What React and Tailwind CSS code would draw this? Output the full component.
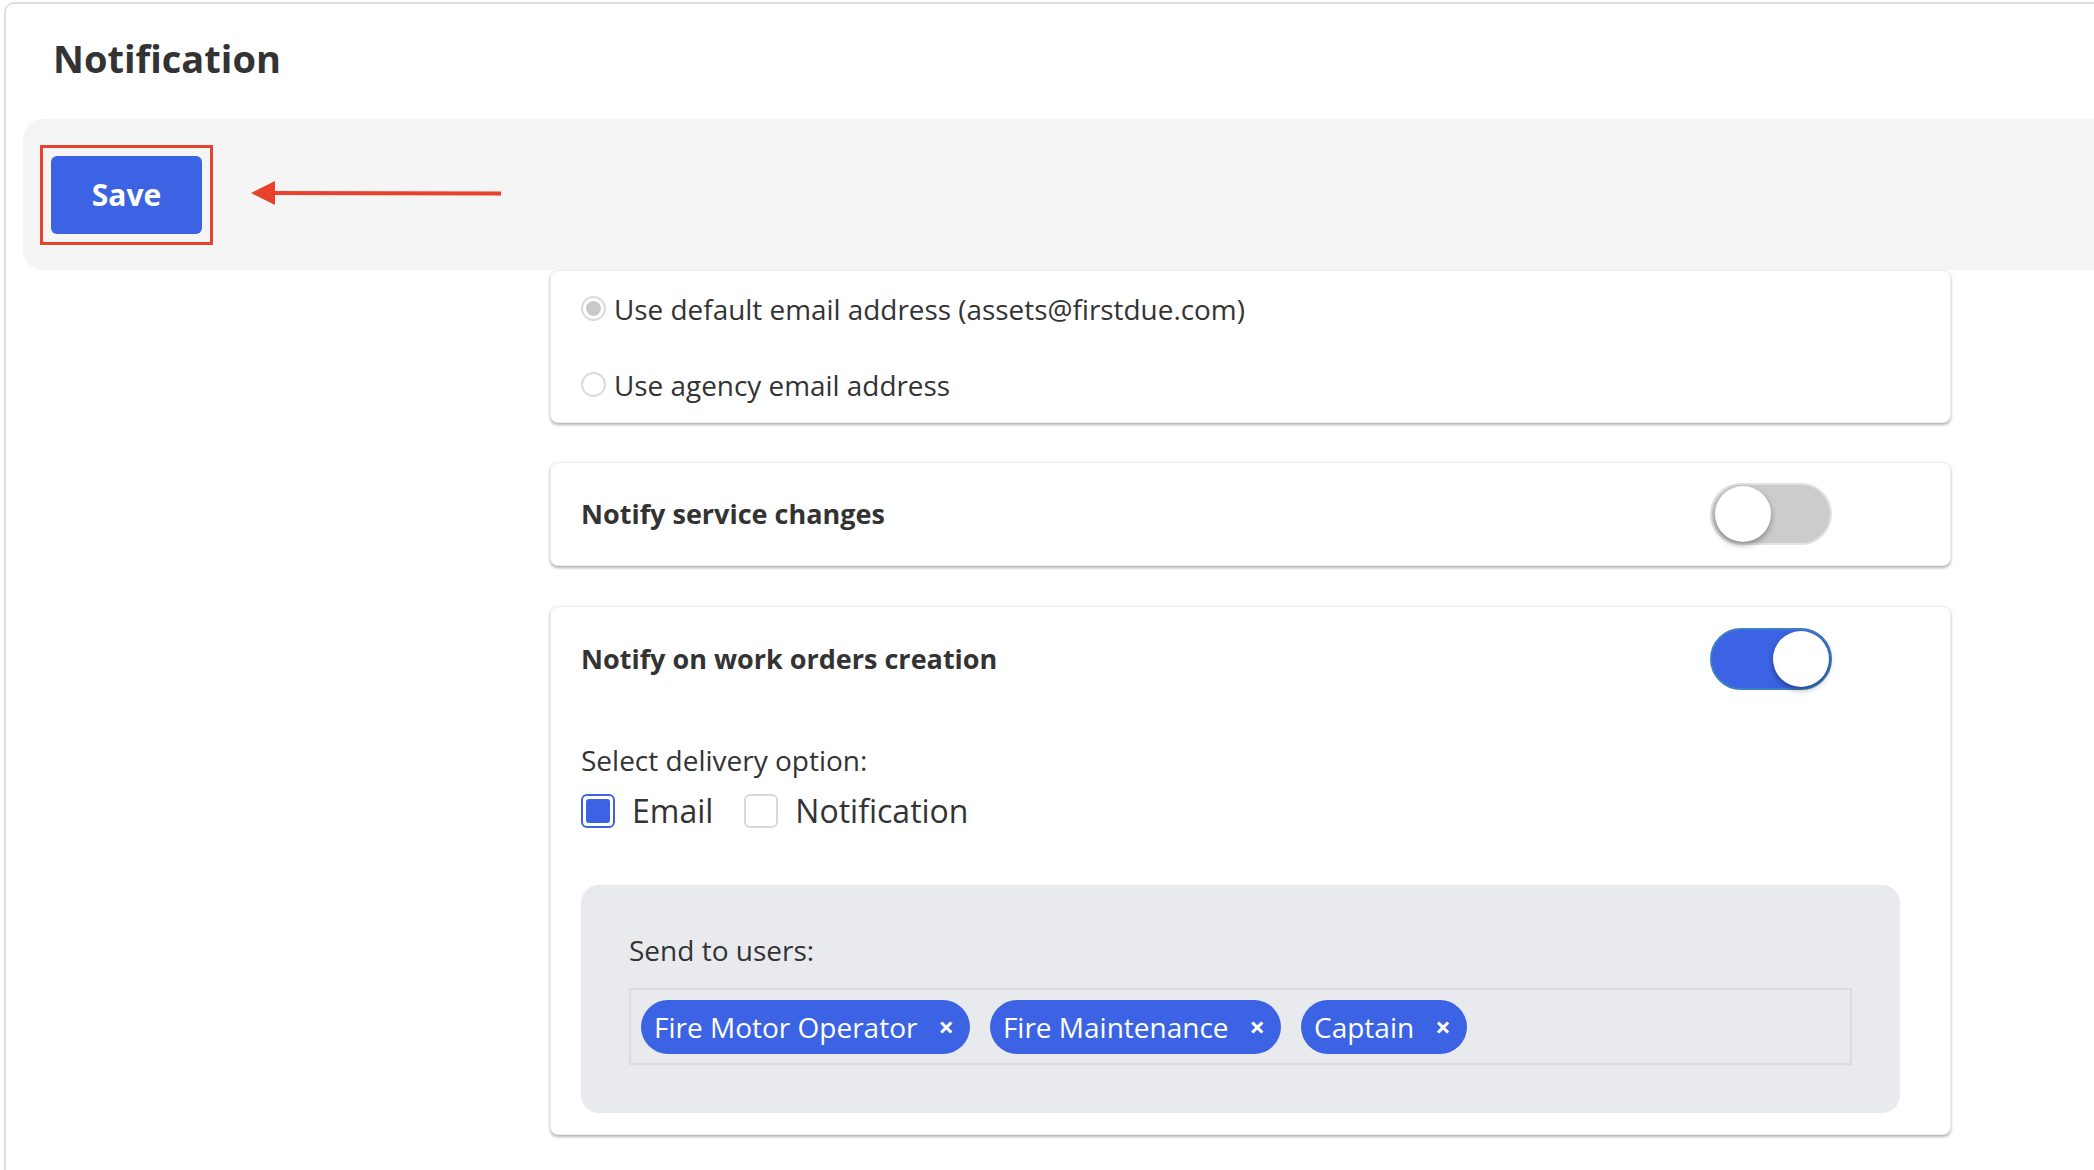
import React, { useState } from "react";

const FONT = { fontFamily: '"Open Sans", "Noto Sans", Arial, sans-serif' };

function Toggle({ on, onChange }) {
  return (
    <button
      onClick={() => onChange(!on)}
      className={
        "relative h-[62px] w-[122px] shrink-0 rounded-full border-2 " +
        (on ? "border-[#3f7fc4] bg-[#3b63e3]" : "border-[#e2e2e2] bg-[#cccccc]")
      }
    >
      <span
        className={
          "absolute top-[1px] h-[56px] w-[56px] rounded-full bg-white shadow-[0_3px_6px_rgba(0,0,0,0.35)] " +
          (on ? "right-[1px]" : "left-[3px]")
        }
      />
    </button>
  );
}

function Radio({ checked, label }) {
  return (
    <label className="flex items-center gap-[8px]">
      <span className="flex h-[25px] w-[25px] items-center justify-center rounded-full border-2 border-[#dadada] bg-white">
        {checked && <span className="h-[15px] w-[15px] rounded-full bg-[#c9c9c9]" />}
      </span>
      <span className="text-[27.9px] leading-[38px] text-[#333]">{label}</span>
    </label>
  );
}

function Checkbox({ checked, label, onChange }) {
  return (
    <label className="flex cursor-pointer items-center gap-[17px]" onClick={() => onChange(!checked)}>
      <span
        className={
          "flex h-[34px] w-[34px] items-center justify-center rounded-[6px] border-2 bg-white " +
          (checked ? "border-[#3b63e3]" : "border-[#d9d9d9]")
        }
      >
        {checked && <span className="h-[24px] w-[24px] rounded-[3px] bg-[#3b63e3]" />}
      </span>
      <span className="text-[32px] text-[#333]">{label}</span>
    </label>
  );
}

function Tag({ label }) {
  return (
    <span className="flex h-[54px] items-center gap-[21px] rounded-full bg-[#3b63e3] pl-[13px] pr-[16px] text-[28px] text-white">
      {label}
      <span className="text-[27px] font-bold leading-none">×</span>
    </span>
  );
}

export default function App() {
  const [serviceOn, setServiceOn] = useState(false);
  const [workOn, setWorkOn] = useState(true);
  const [email, setEmail] = useState(true);
  const [notif, setNotif] = useState(false);

  return (
    <div className="min-h-screen bg-white pl-[4px] pt-[2px]" style={FONT}>
      <div className="min-h-[1168px] rounded-tl-[10px] border-l-2 border-t-2 border-[#dedede] bg-white">
        <h1 className="pl-[47px] pt-[26px] text-[38px] font-bold leading-[56px] text-[#333]">Notification</h1>

        {/* Toolbar */}
        <div className="ml-[17px] mt-[33px] flex h-[151px] items-center rounded-l-[20px] bg-[#f5f5f5] pl-[17px]">
          <div className="border-[3px] border-[#e8412c] p-[8px]">
            <button className="h-[78px] w-[151px] rounded-[6px] bg-[#3b63e3] text-[30px] font-bold text-white">
              Save
            </button>
          </div>
          <svg width="252" height="26" viewBox="0 0 252 26" className="-mt-[3px] ml-[38px]">
            <line x1="20" y1="13" x2="250" y2="13.5" stroke="#e8412c" strokeWidth="4" />
            <polygon points="0,13 24,1 24,25" fill="#e8412c" />
          </svg>
        </div>

        {/* Cards */}
        <div className="ml-[544px] flex w-[1401px] flex-col">
          <div className="flex h-[153px] flex-col justify-center gap-[38px] rounded-[8px] border border-[#ececec] bg-white pl-[30px] shadow-[0_2px_3px_rgba(0,0,0,0.3)]">
            <Radio checked label="Use default email address (assets@firstdue.com)" />
            <Radio label="Use agency email address" />
          </div>

          <div className="mt-[39px] flex h-[104px] items-center justify-between rounded-[8px] border border-[#ececec] bg-white pl-[30px] pr-[118px] shadow-[0_2px_3px_rgba(0,0,0,0.3)]">
            <span className="text-[27px] font-bold text-[#333]">Notify service changes</span>
            <Toggle on={serviceOn} onChange={setServiceOn} />
          </div>

          <div className="mt-[40px] rounded-[8px] border border-[#ececec] bg-white pb-[21px] pl-[30px] pr-[50px] pt-[21px] shadow-[0_2px_3px_rgba(0,0,0,0.3)]">
            <div className="flex items-center justify-between pr-[68px]">
              <span className="text-[27px] font-bold text-[#333]">Notify on work orders creation</span>
              <Toggle on={workOn} onChange={setWorkOn} />
            </div>
            <div className="mt-[50px] text-[28px] leading-[40px] text-[#333]">Select delivery option:</div>
            <div className="mt-[7px] flex items-center gap-[31px]">
              <Checkbox checked={email} label="Email" onChange={setEmail} />
              <Checkbox checked={notif} label="Notification" onChange={setNotif} />
            </div>

            <div className="mt-[50px] rounded-[18px] bg-[#e9eaee] px-[48px] pb-[48px] pt-[45px]">
              <div className="text-[28px] leading-[40px] text-[#333]">Send to users:</div>
              <div className="mt-[18px] flex h-[77px] items-center gap-[20px] border-2 border-[#dcdcde] pl-[10px]">
                <Tag label="Fire Motor Operator" />
                <Tag label="Fire Maintenance" />
                <Tag label="Captain" />
              </div>
            </div>
          </div>
        </div>
      </div>
    </div>
  );
}
